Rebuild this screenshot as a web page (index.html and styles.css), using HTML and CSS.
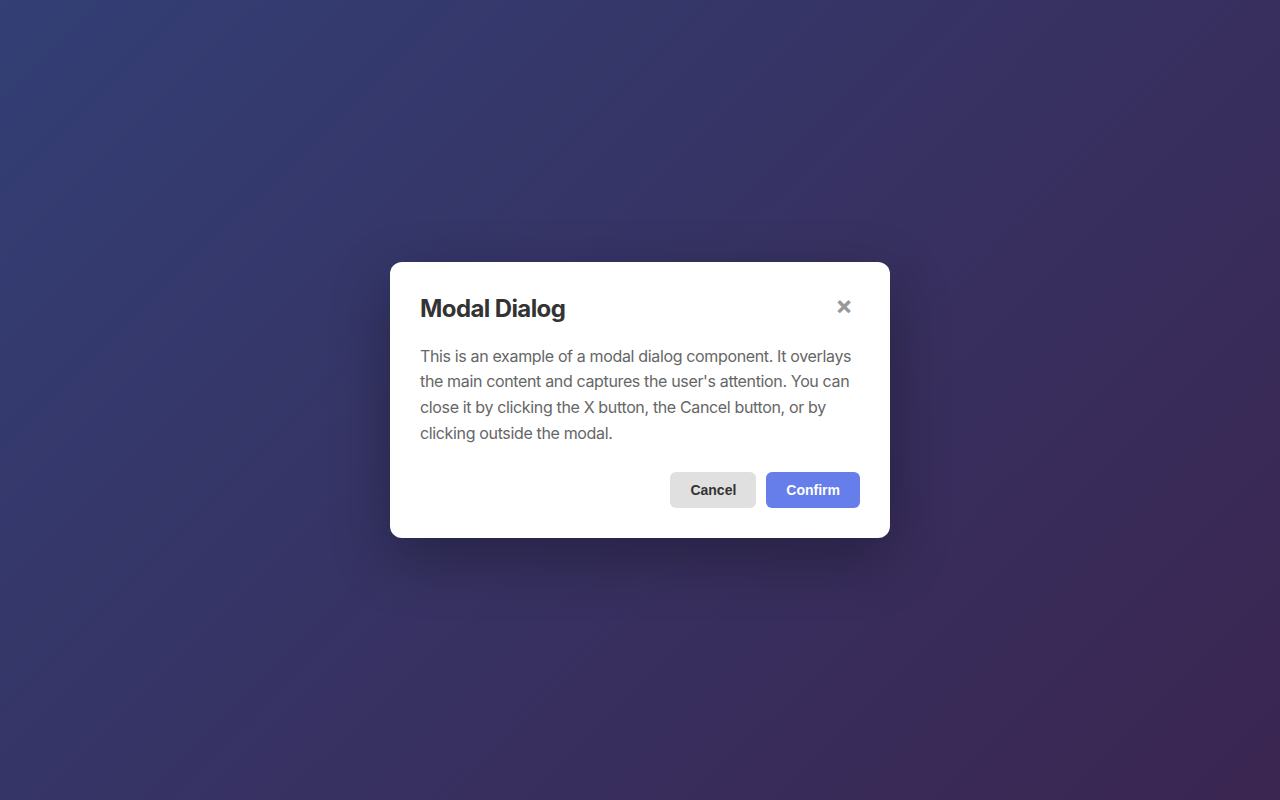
FILE: index.html
```html
<!DOCTYPE html>
<html lang="en">
<head>
<meta charset="utf-8">
<title>Modal Dialog</title>
<link rel="stylesheet" href="styles.css">
</head>
<body>
<div class="overlay">
  <div class="modal" role="dialog" aria-labelledby="modal-title">
    <div class="modal-header">
      <h2 id="modal-title" class="modal-title">Modal Dialog</h2>
      <button class="close-btn" aria-label="Close">&times;</button>
    </div>
    <p class="modal-body">This is an example of a modal dialog component. It overlays the main content and captures the user's attention. You can close it by clicking the X button, the Cancel button, or by clicking outside the modal.</p>
    <div class="modal-footer">
      <button class="btn btn-cancel">Cancel</button>
      <button class="btn btn-confirm">Confirm</button>
    </div>
  </div>
</div>
</body>
</html>
```

FILE: styles.css
```css
* { box-sizing: border-box; }
html, body { margin: 0; height: 100%; }
body {
  font-family: Inter, "Noto Sans", sans-serif;
  background: linear-gradient(135deg, #667eea 0%, #764ba2 100%);
  min-height: 100vh;
}
.overlay {
  height: 100vh;
  background: rgba(0, 0, 0, 0.5);
  display: flex;
  align-items: center;
  justify-content: center;
}
.modal {
  width: 500px;
  background: #fff;
  border-radius: 12px;
  padding: 32px 30px 30px;
  box-shadow: 0 20px 60px rgba(0, 0, 0, 0.3);
}
.modal-header {
  display: flex;
  align-items: flex-start;
  justify-content: space-between;
  margin-bottom: 21px;
}
.modal-title {
  margin: 0;
  font-size: 24px;
  font-weight: 700;
  letter-spacing: -0.025em;
  color: #333;
}
.close-btn {
  width: 32px;
  height: 26px;
  margin-top: -1px;
  padding: 0;
  border: none;
  background: none;
  color: #999;
  font-family: Inter, "Noto Sans", sans-serif;
  font-size: 26px;
  font-weight: 700;
  line-height: 1;
  display: flex;
  align-items: center;
  justify-content: center;
  cursor: pointer;
}
.modal-body {
  margin: 0 0 26px;
  font-size: 16px;
  line-height: 1.6;
  letter-spacing: -0.022em;
  color: #666;
}
.modal-footer {
  display: flex;
  justify-content: flex-end;
  gap: 10px;
}
.btn {
  font-family: "Liberation Sans", Arial, sans-serif;
  font-size: 14px;
  font-weight: 700;
  padding: 10px 20px;
  border: none;
  border-radius: 6px;
  cursor: pointer;
}
.btn-cancel { background: #e0e0e0; color: #333; }
.btn-confirm { background: #667eea; color: #fff; }
```
